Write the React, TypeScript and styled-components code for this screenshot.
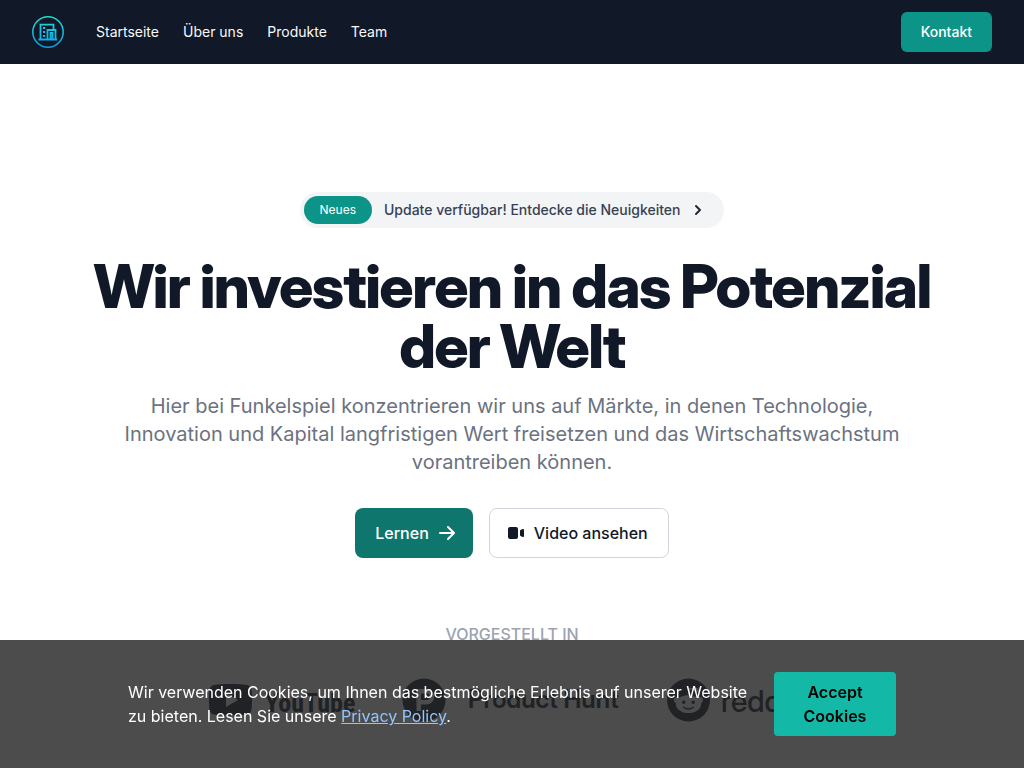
import React from "react";
import styled, { createGlobalStyle } from "styled-components";

const GlobalStyle = createGlobalStyle`
  *, *::before, *::after { box-sizing: border-box; }
  html { overflow: hidden; }
  body {
    margin: 0;
    background: #ffffff;
    color: #111827;
    font-family: Inter, sans-serif;
    font-size: 16px;
    line-height: 24px;
  }
  h1, p, ul { margin: 0; padding: 0; }
  a { color: inherit; text-decoration: none; }
  button { font: inherit; border: 0; cursor: pointer; }
`;

const Header = styled.header`
  display: flex;
  align-items: center;
  justify-content: space-between;
  height: 64px;
  padding: 0 32px;
  background: #111827;
`;

const Nav = styled.nav`
  display: flex;
  align-items: center;
  gap: 32px;
`;

const HomeLink = styled.a`
  display: flex;
`;

const NavList = styled.ul`
  display: flex;
  gap: 24px;
  list-style: none;
`;

const NavLink = styled.a`
  display: block;
  color: #f9fafb;
  font-size: 14px;
  line-height: 20px;
`;

const ContactButton = styled.button`
  height: 40px;
  padding: 0 20px;
  border-radius: 6px;
  background: #0d9488;
  color: #ffffff;
  font-size: 14px;
  font-weight: 500;
  line-height: 20px;
`;

const Hero = styled.main`
  display: flex;
  flex-direction: column;
  align-items: center;
  padding: 128px 48px 64px;
  text-align: center;
`;

const Announcement = styled.a`
  display: flex;
  align-items: center;
  gap: 12px;
  margin-bottom: 28px;
  padding: 4px 16px 4px 4px;
  border-radius: 18px;
  background: #f3f4f6;
  color: #374151;
  font-size: 14px;
  font-weight: 500;
  line-height: 20px;

  svg { margin-left: -4px; color: #1f2937; }
`;

const Badge = styled.span`
  padding: 6px 16px;
  border-radius: 14px;
  background: #0d9488;
  color: #ffffff;
  font-size: 12px;
  font-weight: 400;
  line-height: 16px;
`;

const Title = styled.h1`
  margin-bottom: 16px;
  font-family: "Inter Display", Inter, sans-serif;
  font-size: 60px;
  font-weight: 800;
  line-height: 60px;
  letter-spacing: -0.025em;
`;

const Lead = styled.p`
  margin-bottom: 32px;
  padding: 0 64px;
  color: #6b7280;
  font-size: 20px;
  line-height: 28px;
`;

const Actions = styled.div`
  display: flex;
  gap: 16px;
  margin-bottom: 64px;
`;

const ActionLink = styled.a<{ $primary?: boolean }>`
  display: flex;
  align-items: center;
  gap: 8px;
  height: 50px;
  padding: ${(p) => (p.$primary ? "0 16px 0 20px" : "0 20px 0 16px")};
  border: ${(p) => (p.$primary ? "0" : "1px solid #d1d5db")};
  border-radius: 8px;
  background: ${(p) => (p.$primary ? "#0f766e" : "#ffffff")};
  color: ${(p) => (p.$primary ? "#ffffff" : "#111827")};
  font-weight: 500;
`;

const FeaturedLabel = styled.span`
  margin-bottom: 32px;
  color: #9ca3af;
  font-weight: 500;
  text-transform: uppercase;
`;

const Logos = styled.div`
  display: flex;
  align-items: center;
  justify-content: space-between;
  width: 100%;
  max-width: 608px;
  padding-right: 20px;
  color: #6b7280;
`;

const Brand = styled.a`
  display: flex;
  height: 44px;

  svg { overflow: visible; }
  text { fill: currentColor; }
`;

const CookieBar = styled.aside`
  position: fixed;
  right: 0;
  bottom: 0;
  left: 0;
  display: flex;
  justify-content: center;
  padding: 32px 128px;
  background: rgba(0, 0, 0, 0.7);
  color: #ffffff;
`;

const CookieContent = styled.div`
  display: flex;
  align-items: center;
  gap: 24px;
  width: 100%;
`;

const CookieText = styled.p`
  flex: 1;
`;

const PolicyLink = styled.a`
  color: #93c5fd;
  text-decoration: underline;
`;

const AcceptButton = styled.button`
  width: 122px;
  padding: 8px 24px;
  border-radius: 4px;
  background: #14b8a6;
  color: #000000;
  font-weight: 600;
  line-height: 24px;
`;

const LogoMark = () => (
  <svg width="32" height="32" viewBox="0 0 32 32" fill="none" aria-hidden="true">
    <defs>
      <linearGradient id="mark" x1="0" y1="0" x2="0" y2="32" gradientUnits="userSpaceOnUse">
        <stop stopColor="#22e0d0" />
        <stop offset="1" stopColor="#0c9cf0" />
      </linearGradient>
    </defs>
    <g stroke="url(#mark)" strokeWidth="1.8">
      <circle cx="16" cy="16" r="15.2" strokeWidth="1.5" />
      <path d="M6.500 23.500h18.500M8.500 23V8.700h13V14M15.500 23v-9h8V23M18.500 23v-6h2v6" />
      <path d="M11 12h2.200M11 16h2.200M11 20h2.200" strokeWidth="2" />
    </g>
  </svg>
);

const ChevronIcon = () => (
  <svg width="20" height="20" viewBox="0 0 20 20" fill="currentColor" aria-hidden="true">
    <path fillRule="evenodd" clipRule="evenodd" d="M7.293 14.707a1 1 0 010-1.414L10.586 10 7.293 6.707a1 1 0 011.414-1.414l4 4a1 1 0 010 1.414l-4 4a1 1 0 01-1.414 0z" />
  </svg>
);

const ArrowIcon = () => (
  <svg width="20" height="20" viewBox="0 0 20 20" fill="currentColor" aria-hidden="true">
    <path fillRule="evenodd" clipRule="evenodd" d="M10.293 3.293a1 1 0 011.414 0l6 6a1 1 0 010 1.414l-6 6a1 1 0 01-1.414-1.414L14.586 11H3a1 1 0 110-2h11.586l-4.293-4.293a1 1 0 010-1.414z" />
  </svg>
);

const VideoIcon = () => (
  <svg width="20" height="20" viewBox="0 0 20 20" fill="currentColor" aria-hidden="true">
    <path d="M2 6a2 2 0 012-2h6a2 2 0 012 2v8a2 2 0 01-2 2H4a2 2 0 01-2-2V6zM14.553 7.106A1 1 0 0014 8v4a1 1 0 00.553.894l2 1A1 1 0 0018 13V7a1 1 0 00-1.447-.894l-2 1z" />
  </svg>
);

const YouTubeLogo = () => (
  <svg width="146" height="44" viewBox="0 0 146 44" fill="currentColor">
    <path fillRule="evenodd" d="M7 6.700C14 5.800 31 5.800 38 6.700c3 .4 5 2 5.500 5 .8 6 .8 14 0 20-.5 3-2.500 4.700-5.500 5-7 .9-24 .9-31 0-3-.3-5-2-5.500-5-.8-6-.8-14 0-20 .5-3 2.500-4.600 5.500-5zM18 15v14l12-7z" />
    <text x="57" y="34" fontFamily="'Roboto Condensed', Roboto, sans-serif" fontSize="26" fontWeight="700">YouTube</text>
  </svg>
);

const ProductHuntLogo = () => (
  <svg width="218" height="44" viewBox="0 0 218 44" fill="currentColor">
    <path fillRule="evenodd" d="M22 .5a21.500 21.500 0 100 43 21.500 21.500 0 000-43zM14.500 11h10a7.700 7.700 0 010 15.400h-5.600V33h-4.400zM18.900 15.400v6.600h5.600a3.300 3.300 0 000-6.600z" />
    <text x="66" y="30" fontFamily="'Inter Display', Inter, sans-serif" fontSize="25" fontWeight="600">Product Hunt</text>
  </svg>
);

const RedditLogo = () => (
  <svg width="129" height="44" viewBox="0 0 129 44" fill="currentColor">
    <path fillRule="evenodd" d="M21.500 .5a21.500 21.500 0 100 43 21.500 21.500 0 000-43zM36 22c0 1.300-.8 2.400-1.800 2.900.5 6-5.500 10.100-12.700 10.100S8.500 31 8.800 24.900C5.500 23.300 7 18.700 10.200 18.900c.8 0 1.500.4 2 .9 2.300-1.600 5.300-2.500 8.500-2.600l1.600-7.500 5.500 1.200a2.200 2.200 0 11-.3 1.500l-4.300-1-1.300 5.800c3.200.1 6.200 1 8.400 2.600 2-2 5.700-.7 5.700 2.200zM15 24.200a1.800 1.800 0 103.600 0 1.800 1.800 0 00-3.600 0zm9.400 0a1.800 1.800 0 103.600 0 1.800 1.800 0 00-3.600 0zm1.600 4.600c-2 1.800-7 1.800-9 0-.8-.4-1.400.4-.8 1 3 2.600 7.600 2.600 10.600 0 .6-.6-.2-1.500-.8-1z" />
    <text x="54" y="34" fontFamily="'Inter Display', Inter, sans-serif" fontSize="30" fontWeight="500">reddit</text>
  </svg>
);

const links = ["Startseite", "Über uns", "Produkte", "Team"];

export default function App() {
  return (
    <>
      <GlobalStyle />
      <Header>
        <Nav aria-label="Hauptnavigation">
          <HomeLink href="#" aria-label="Funkelspiel"><LogoMark /></HomeLink>
          <NavList>
            {links.map((label) => (
              <li key={label}><NavLink href="#">{label}</NavLink></li>
            ))}
          </NavList>
        </Nav>
        <ContactButton type="button">Kontakt</ContactButton>
      </Header>
      <Hero>
        <Announcement href="#">
          <Badge>Neues</Badge>
          <span>Update verfügbar! Entdecke die Neuigkeiten</span>
          <ChevronIcon />
        </Announcement>
        <Title>Wir investieren in das Potenzial der Welt</Title>
        <Lead>
          Hier bei Funkelspiel konzentrieren wir uns auf Märkte, in denen Technologie, Innovation und
          Kapital langfristigen Wert freisetzen und das Wirtschaftswachstum vorantreiben können.
        </Lead>
        <Actions>
          <ActionLink href="#" $primary>Lernen <ArrowIcon /></ActionLink>
          <ActionLink href="#"><VideoIcon /> Video ansehen</ActionLink>
        </Actions>
        <FeaturedLabel>Vorgestellt in</FeaturedLabel>
        <Logos>
          <Brand href="#" aria-label="YouTube"><YouTubeLogo /></Brand>
          <Brand href="#" aria-label="Product Hunt"><ProductHuntLogo /></Brand>
          <Brand href="#" aria-label="Reddit"><RedditLogo /></Brand>
        </Logos>
      </Hero>
      <CookieBar aria-label="Cookies">
        <CookieContent>
          <CookieText>
            Wir verwenden Cookies, um Ihnen das bestmögliche Erlebnis auf unserer Website zu bieten.
            Lesen Sie unsere <PolicyLink href="#">Privacy Policy</PolicyLink>.
          </CookieText>
          <AcceptButton type="button">Accept Cookies</AcceptButton>
        </CookieContent>
      </CookieBar>
    </>
  );
}
